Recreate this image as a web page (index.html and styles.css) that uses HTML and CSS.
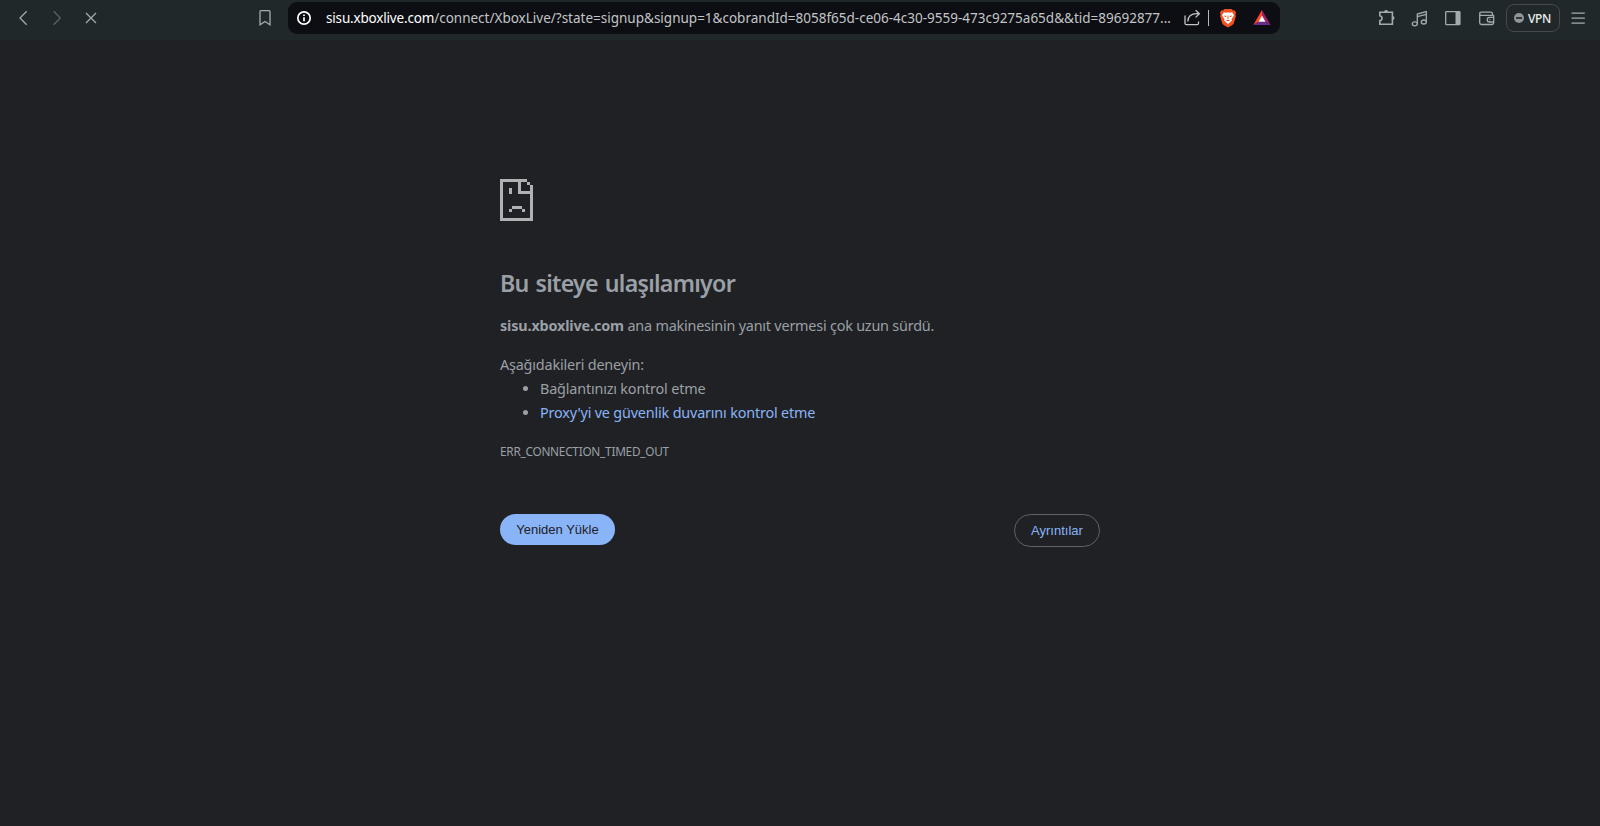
FILE: index.html
```
<!DOCTYPE html>
<html lang="tr">
<head>
  <meta charset="UTF-8">
  <title>sisu.xboxlive.com</title>
  <link rel="stylesheet" href="styles.css">
</head>
<body>

  <header class="toolbar">
    <nav class="nav-buttons">
      <svg class="icon" viewBox="0 0 20 20"><path d="M12.7 3.2 6 10l6.7 6.8"/></svg>
      <svg class="icon disabled" viewBox="0 0 20 20"><path d="M5.7 3.2 12.3 10l-6.6 6.8"/></svg>
      <svg class="icon" viewBox="0 0 20 20"><path d="M5 5l10 10M15 5 5 15"/></svg>
    </nav>

    <svg class="icon bookmark" viewBox="0 0 20 20"><path d="M5 3.6q0-.9.9-.9h8.2q.9 0 .9.9v13.2l-5-3.3-5 3.3z"/></svg>

    <div class="address-bar">
      <svg class="info" viewBox="0 0 20 20">
        <circle cx="10" cy="10" r="6.2"/>
        <path d="M10 9.3v4M10 6.4v1.7"/>
      </svg>
      <div class="url"><span class="host">sisu.xboxlive.com</span><span class="path">/connect/XboxLive/?state=signup&amp;signup=1&amp;cobrandId=8058f65d-ce06-4c30-9559-473c9275a65d&amp;&amp;tid=89692877...</span></div>
      <svg class="icon share" viewBox="0 0 20 20"><path d="M3 7.5v7.7q0 1.5 1.5 1.5h10.7q1.3 0 1.3-1.5v-1.7M5.8 13.5c0-5 3-7.8 9-7.8h2.4M13.6 2.2l3.8 3.5-3.8 3.7"/></svg>
      <span class="divider"></span>
      <svg class="brave" viewBox="0 0 20 20">
        <path fill="#f4511e" d="M6.5 1h7l1.7 1.6 1.6-.1 1.2 2.3-.6 1.6.5 1.6-2.1 7.3-1.4 1.7L10 19.4 5.6 17l-1.4-1.7L2.1 8l.5-1.6L2 4.8l1.2-2.3 1.6.1z"/>
        <path fill="#fff" d="M6 4.2l2.2.5L10 4.3l1.8.4 2.2-.5 1.9 2.6-.5 1.8-1.9 2.4.5 1.5-1.5 1.3-2.5 2.5-2.5-2.5L6 12.5l.5-1.5-1.9-2.4L4.1 6.8z"/>
        <path fill="#f4511e" d="M6.2 7.5l2.5.6-.8 1-1.5-.6zM13.8 7.5l-2.5.6.8 1 1.5-.6zM9.7 7.5h.6l.3 3.1-.6.5-.6-.5zM7.8 12.3l2.2-.6 2.2.6-2.2 1.1z"/>
      </svg>
      <svg class="rewards" viewBox="0 0 20 20">
        <path fill="#ff4724" d="M10 2v6.3l-3 5.2L1.3 17z"/>
        <path fill="#9e1f63" d="M10 2l8.7 15-5.7-3.5-3-5.2z"/>
        <path fill="#662d91" d="M1.3 17 7 13.5h6l5.7 3.5z"/>
        <path fill="#fff" d="M10 7.6l3.5 6.1h-7z"/>
      </svg>
    </div>

    <div class="extensions">
      <svg class="icon" viewBox="0 0 20 20">
        <path class="puzzle" d="M2.8 4.2h12.6v12.1H2.8v-3.4c2.9-.5 2.9-4.6 0-5.1z"/>
        <path class="fill" d="M7 4.2a2.1 2.1 0 0 1 4.2 0zM15.4 8a2.1 2.1 0 0 1 0 4.2z"/>
      </svg>
      <svg class="icon" viewBox="0 0 20 20">
        <path d="M7.3 15.6V6l9-2.4v10.3M7.3 8.7l9-2.4"/>
        <ellipse cx="4.8" cy="15.8" rx="2.5" ry="2"/>
        <ellipse cx="13.8" cy="14" rx="2.5" ry="2"/>
      </svg>
      <svg class="icon" viewBox="0 0 20 20">
        <rect x="2.7" y="3.7" width="14.2" height="13" rx=".8"/>
        <path class="fill" d="M12.5 3.5h4.6v13.4h-4.6z"/>
      </svg>
      <svg class="icon" viewBox="0 0 20 20">
        <path d="M17.7 7.3H5.2q-1.5 0-1.5-1.6 0-1.6 1.5-1.6h9.6q1.7 0 1.7 1.6v1.6M3.7 5.7v9q0 1.8 1.8 1.8h10.4q1.8 0 1.8-1.8V7.3M17.7 9.4h-4.2a2.3 2.3 0 0 0 0 4.6h4.2M13.4 11.7h1"/>
      </svg>
    </div>

    <div class="vpn">
      <span class="vpn-dot"></span>
      <span class="vpn-label">VPN</span>
    </div>
    <svg class="icon menu" viewBox="0 0 20 20"><path d="M3.5 5.2h13.3M3.5 10.2h13.3M3.5 15.2h13.3"/></svg>
  </header>

  <main class="error-page">
    <svg class="sad-page" viewBox="0 0 11 14" shape-rendering="crispEdges">
      <path d="M0 0h9v1h1v1h1v12H0zM1 1v12h9V5H6V1zM7 1v3h3V2H9V1z" fill-rule="evenodd"/>
      <path d="M3 3h1v2H3zM4 9h3.3v1H4zM3 10h1v1H3zM7.3 10h1v1h-1z"/>
    </svg>

    <h1>Bu siteye ulaşılamıyor</h1>
    <p class="summary"><strong>sisu.xboxlive.com</strong> ana makinesinin yanıt vermesi çok uzun sürdü.</p>

    <div class="suggestions">
      <p>Aşağıdakileri deneyin:</p>
      <ul>
        <li>Bağlantınızı kontrol etme</li>
        <li><a href="#">Proxy'yi ve güvenlik duvarını kontrol etme</a></li>
      </ul>
    </div>

    <div class="error-code">ERR_CONNECTION_TIMED_OUT</div>

    <div class="buttons">
      <button class="reload">Yeniden Yükle</button>
      <button class="details">Ayrıntılar</button>
    </div>
  </main>

</body>
</html>
```

FILE: styles.css
```
* {
  box-sizing: border-box;
}

body {
  margin: 0;
  min-height: 826px;
  background: #202124;
  color: #9aa0a6;
  font-family: "Noto Sans", "Open Sans", sans-serif;
  font-size: 14.4px;
}

.toolbar {
  display: flex;
  align-items: center;
  height: 40px;
  padding: 0 12px 4px 14px;
  background: #212829;
}

.icon {
  flex: none;
  width: 20px;
  height: 20px;
  fill: none;
  stroke: #a3abad;
  stroke-width: 1.3;
}

.icon .fill {
  fill: #a3abad;
  stroke: none;
}

.puzzle {
  stroke-width: 1.6;
}

.nav-buttons {
  display: flex;
  gap: 13.5px;
}

.nav-buttons .disabled {
  stroke: #5b6263;
}

.bookmark {
  margin-left: 154px;
}

.address-bar {
  display: flex;
  align-items: center;
  width: 992px;
  height: 32px;
  margin-left: 13px;
  padding-left: 6px;
  border-radius: 9px;
  background: #0c0e13;
}

.info {
  flex: none;
  width: 20px;
  height: 20px;
  fill: none;
  stroke: #fff;
  stroke-width: 1.7;
}

.url {
  flex: none;
  width: 856px;
  margin-left: 12px;
  font-size: 13.5px;
  line-height: 20px;
  white-space: nowrap;
  color: #c3c5c6;
}

.host {
  color: #fff;
  letter-spacing: -0.18px;
}

.share {
  stroke: #c3c5c6;
}

.divider {
  width: 1px;
  height: 16px;
  margin: 0 9px 0 6px;
  background: #b5b7b8;
}

.brave,
.rewards {
  flex: none;
  width: 20px;
  height: 20px;
}

.rewards {
  margin-left: 14px;
}

.extensions {
  display: flex;
  gap: 13px;
  margin-left: 97px;
}

.vpn {
  display: flex;
  align-items: center;
  width: 54px;
  height: 28px;
  margin-left: 10px;
  padding-left: 7px;
  border: 1px solid #454b4d;
  border-radius: 8px;
}

.vpn-dot {
  display: flex;
  align-items: center;
  justify-content: center;
  width: 10px;
  height: 10px;
  border-radius: 50%;
  background: #8e9499;
}

.vpn-dot::after {
  content: "";
  width: 6px;
  height: 1.5px;
  background: #33393b;
}

.vpn-label {
  margin-left: 4px;
  color: #eceeee;
  font-size: 12px;
  font-weight: 500;
  letter-spacing: -0.3px;
}

.menu {
  margin-left: 8px;
}

.error-page {
  width: 600px;
  margin: 0 auto;
  padding-top: 139px;
}

.sad-page {
  display: block;
  width: 33px;
  height: 42px;
  fill: #b0b1b3;
}

h1 {
  margin: 47px 0 0;
  font-size: 23.2px;
  font-weight: 600;
  line-height: 30px;
  letter-spacing: -0.72px;
  word-spacing: 1.5px;
  white-space: nowrap;
}

p {
  margin: 0;
  line-height: 24px;
  white-space: nowrap;
}

.summary {
  margin-top: 16px;
  letter-spacing: -0.21px;
}

.summary strong {
  letter-spacing: -0.15px;
}

.suggestions {
  margin-top: 15px;
  letter-spacing: -0.18px;
}

ul {
  margin: 0;
  padding-left: 40px;
  line-height: 24px;
  white-space: nowrap;
}

a {
  color: #8ab4f8;
  text-decoration: none;
}

.error-code {
  margin-top: 14px;
  font-size: 11.8px;
  line-height: 24px;
  letter-spacing: -0.25px;
}

.buttons {
  display: flex;
  align-items: flex-start;
  justify-content: space-between;
  margin-top: 51px;
}

button {
  padding: 0;
  border: 0;
  border-radius: 17px;
  font-family: "Liberation Sans", Arial, sans-serif;
  font-size: 13px;
}

.reload {
  width: 115px;
  height: 31px;
  background: #8ab4f8;
  color: #202124;
}

.details {
  width: 86px;
  height: 33px;
  border: 1px solid #5f6368;
  background: #202124;
  color: #8ab4f8;
}
```
